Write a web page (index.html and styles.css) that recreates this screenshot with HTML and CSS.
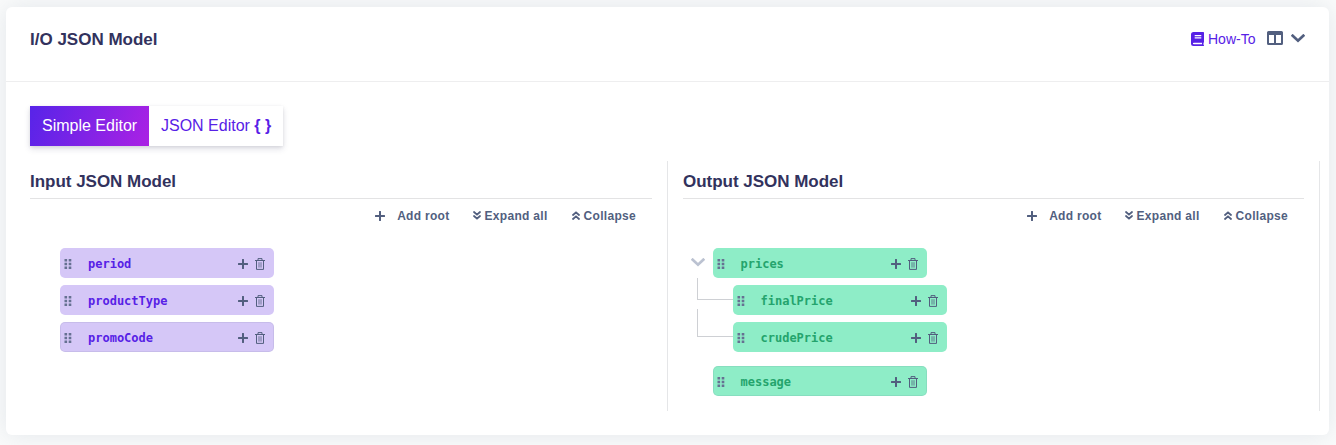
FILE: index.html
```html
<!DOCTYPE html>
<html lang="en">
<head>
<meta charset="utf-8">
<title>I/O JSON Model</title>
<link rel="stylesheet" href="styles.css">
</head>
<body>
<svg class="defs" aria-hidden="true">
  <symbol id="plus" viewBox="0 0 10 10"><path d="M5 0.8V9.2M0.8 5H9.2" fill="none" stroke="currentColor" stroke-width="2" stroke-linecap="round"/></symbol>
  <symbol id="trash" viewBox="0 0 10 12"><path d="M0 2.500H10M3 2.300V0.600H7V2.300M1.500 2.500V11.400H8.500V2.500" fill="none" stroke="currentColor" stroke-width="1"/><path d="M4 4.200V9.600M6 4.200V9.600" fill="none" stroke="currentColor" stroke-width=".8"/></symbol>
  <symbol id="grip" viewBox="0 0 8 10"><path d="M0.5 0h2.600v2.600H.5zM4.700 0h2.600v2.600H4.700zM.5 3.700h2.600v2.600H.5zM4.700 3.700h2.600v2.600H4.700zM.5 7.400h2.600V10H.5zM4.700 7.400h2.600V10H4.700z" fill="currentColor"/></symbol>
  <symbol id="down2" viewBox="0 0 8 9"><path d="M1 1L4 3.700L7 1M1 5L4 7.700L7 5" fill="none" stroke="currentColor" stroke-width="1.800" stroke-linecap="round" stroke-linejoin="round"/></symbol>
  <symbol id="up2" viewBox="0 0 8 9"><path d="M1 4L4 1.300L7 4M1 8L4 5.300L7 8" fill="none" stroke="currentColor" stroke-width="1.800" stroke-linecap="round" stroke-linejoin="round"/></symbol>
  <symbol id="chevron" viewBox="0 0 14 9"><path d="M1.700 1.700L7 6.700L12.300 1.700" fill="none" stroke="currentColor" stroke-width="2.700" stroke-linecap="square"/></symbol>
</svg>
<main class="card">
  <header class="card-head">
    <h1 class="title">I/O JSON Model</h1>
    <div class="head-tools">
      <a class="howto"><svg class="book" viewBox="0 0 13 14"><path fill="currentColor" fill-rule="evenodd" d="M2.500 0H12.300Q13 0 13 .7V10Q13 10.500 12.500 10.800V12.800Q13 13 13 13.400Q13 14 12.300 14H2.500Q0 14 0 11.500V2.500Q0 0 2.500 0zM3.700 3V4.200H10.300V3zM3.700 5.200V6.400H10.300V5.200zM2.800 10.700Q1.900 10.700 1.900 11.500T2.800 12.300H11V10.700z"/></svg><span>How-To</span></a>
      <svg class="columns" viewBox="0 0 16 14"><path fill="currentColor" fill-rule="evenodd" d="M1.500 0h13A1.500 1.500 0 0 1 16 1.500v11a1.500 1.500 0 0 1-1.500 1.500h-13A1.500 1.500 0 0 1 0 12.500v-11A1.500 1.500 0 0 1 1.500 0zM2 4v8h5V4zM9 4v8h5V4z"/></svg>
      <svg class="toggle"><use href="#chevron"/></svg>
    </div>
  </header>
  <div class="card-body">
    <nav class="tabs">
      <a class="tab active">Simple Editor</a>
      <a class="tab">JSON Editor <b>{ }</b></a>
    </nav>
    <div class="panes">
      <section class="pane">
        <h2 class="title pane-title">Input JSON Model</h2>
        <div class="actions">
          <span class="action add"><svg class="plus"><use href="#plus"/></svg>Add root</span>
          <span class="action expand"><svg class="dbl"><use href="#down2"/></svg>Expand all</span>
          <span class="action"><svg class="dbl"><use href="#up2"/></svg>Collapse</span>
        </div>
        <ul class="tree input">
          <li class="node"><svg class="grip"><use href="#grip"/></svg><span class="name">period</span><svg class="plus"><use href="#plus"/></svg><svg class="trash"><use href="#trash"/></svg></li>
          <li class="node"><svg class="grip"><use href="#grip"/></svg><span class="name">productType</span><svg class="plus"><use href="#plus"/></svg><svg class="trash"><use href="#trash"/></svg></li>
          <li class="node last"><svg class="grip"><use href="#grip"/></svg><span class="name">promoCode</span><svg class="plus"><use href="#plus"/></svg><svg class="trash"><use href="#trash"/></svg></li>
        </ul>
      </section>
      <section class="pane">
        <h2 class="title pane-title">Output JSON Model</h2>
        <div class="actions">
          <span class="action add"><svg class="plus"><use href="#plus"/></svg>Add root</span>
          <span class="action expand"><svg class="dbl"><use href="#down2"/></svg>Expand all</span>
          <span class="action"><svg class="dbl"><use href="#up2"/></svg>Collapse</span>
        </div>
        <ul class="tree output">
          <li class="branch"><svg class="caret"><use href="#chevron"/></svg><div class="node"><svg class="grip"><use href="#grip"/></svg><span class="name">prices</span><svg class="plus"><use href="#plus"/></svg><svg class="trash"><use href="#trash"/></svg></div></li>
          <li class="branch"><i class="elbow first"></i><div class="node"><svg class="grip"><use href="#grip"/></svg><span class="name">finalPrice</span><svg class="plus"><use href="#plus"/></svg><svg class="trash"><use href="#trash"/></svg></div></li>
          <li class="branch"><i class="elbow"></i><div class="node"><svg class="grip"><use href="#grip"/></svg><span class="name">crudePrice</span><svg class="plus"><use href="#plus"/></svg><svg class="trash"><use href="#trash"/></svg></div></li>
          <li class="node last message"><svg class="grip"><use href="#grip"/></svg><span class="name">message</span><svg class="plus"><use href="#plus"/></svg><svg class="trash"><use href="#trash"/></svg></li>
        </ul>
      </section>
    </div>
  </div>
</main>
</body>
</html>
```
FILE: styles.css
```css
* { box-sizing: border-box; }
body { margin: 0; height: 445px; overflow: hidden; padding: 7px 7px 10px 6px; background: #fafbfb; font-family: "Liberation Sans", Arial, sans-serif; color: #525f7f; }
svg { display: block; flex: none; }
.defs { display: none; }
.card { height: 428px; background: #fff; border-radius: 6px; box-shadow: 0 0 24px rgba(136, 152, 170, .2); }
.card-head { height: 75px; padding: 0 24px; display: flex; justify-content: space-between; align-items: flex-start; border-bottom: 1px solid #eeeeef; }
.title { margin: 0; font-size: 17px; font-weight: 700; color: #32325d; white-space: nowrap; }
.card-head .title { padding-top: 21px; line-height: 24px; }
.pane-title { letter-spacing: -.02px; }
.head-tools { display: flex; align-items: center; height: 24px; margin-top: 20px; }
.howto { display: flex; align-items: center; gap: 4px; width: 76px; font-size: 14px; line-height: 20px; color: #5721e6; }
.book { width: 13px; height: 14px; }
.columns { width: 16px; height: 14px; margin-top: -2px; }
.toggle { width: 14px; height: 9px; margin: -2px 0 0 8px; }
.card-body { padding: 24px 9px 0 24px; }
.tabs { display: flex; width: 253px; height: 40px; box-shadow: 0 3px 6px rgba(50, 50, 93, .15), 0 1px 3px rgba(0, 0, 0, .08); }
.tab { padding: 0 12px; font-size: 16px; line-height: 39px; color: #5721e6; white-space: nowrap; }
.tab.active { width: 119px; color: #fff; background: linear-gradient(110deg, #5724e8, #ab22e4); }
.panes { display: grid; grid-template-columns: 638px 652px; margin-top: 15px; }
.pane { height: 250px; border-right: 1px solid #e5e6e8; }
.pane + .pane { padding-left: 15px; }
.pane-title { height: 38px; width: 622px; padding-top: 10px; line-height: 21px; border-bottom: 1px solid #e3e3e4; }
.pane + .pane .pane-title { width: 621px; }
.actions { display: flex; justify-content: flex-end; width: 606px; height: 34px; font-size: 12px; font-weight: 700; letter-spacing: .3px; }
.pane + .pane .actions { width: 605px; }
.action { display: flex; align-items: center; height: 33px; gap: 4px; white-space: nowrap; }
.plus { width: 10px; height: 10px; }
.add { gap: 12px; margin-right: 23px; }
.expand { margin-right: 24px; }
.dbl { width: 8px; height: 9px; }
.tree { list-style: none; margin: 15px 0 0; padding: 0 0 0 30px; display: flex; flex-direction: column; gap: 7px; }
.node { display: flex; align-items: center; width: 214px; height: 30px; padding: 2px 9px 0 5px; border-radius: 5px; background: #d5c7f7; font: 700 12px/28px "DejaVu Sans Mono", monospace; color: #5721e6; }
.last { box-shadow: inset 0 0 0 1px rgba(82, 95, 127, .1); }
.grip { width: 8px; height: 10px; color: #667192; }
.name { flex: 1; padding-left: 15px; }
.node .plus, .trash { color: #525f7f; }
.trash { width: 10px; height: 12px; margin-left: 7px; }
.input .grip { margin-left: -1px; }
.input .name { padding-left: 16px; }
.output { padding-left: 0; }
.output .node { background: #8eedc7; color: #24a46d; padding-left: 4px; }
.output .name { padding-left: 15.5px; }
.branch { display: flex; height: 30px; }
.caret { width: 14px; height: 9px; margin: 10px 8px 0; color: #bbc2d1; }
.elbow { width: 36px; height: 28px; margin: -13px 0 0 14px; border-left: 1px solid #ced0d4; border-bottom: 1px solid #ced0d4; }
.elbow.first { height: 22px; margin-top: -7px; }
.message { margin: 7px 0 0 30px; }
```
